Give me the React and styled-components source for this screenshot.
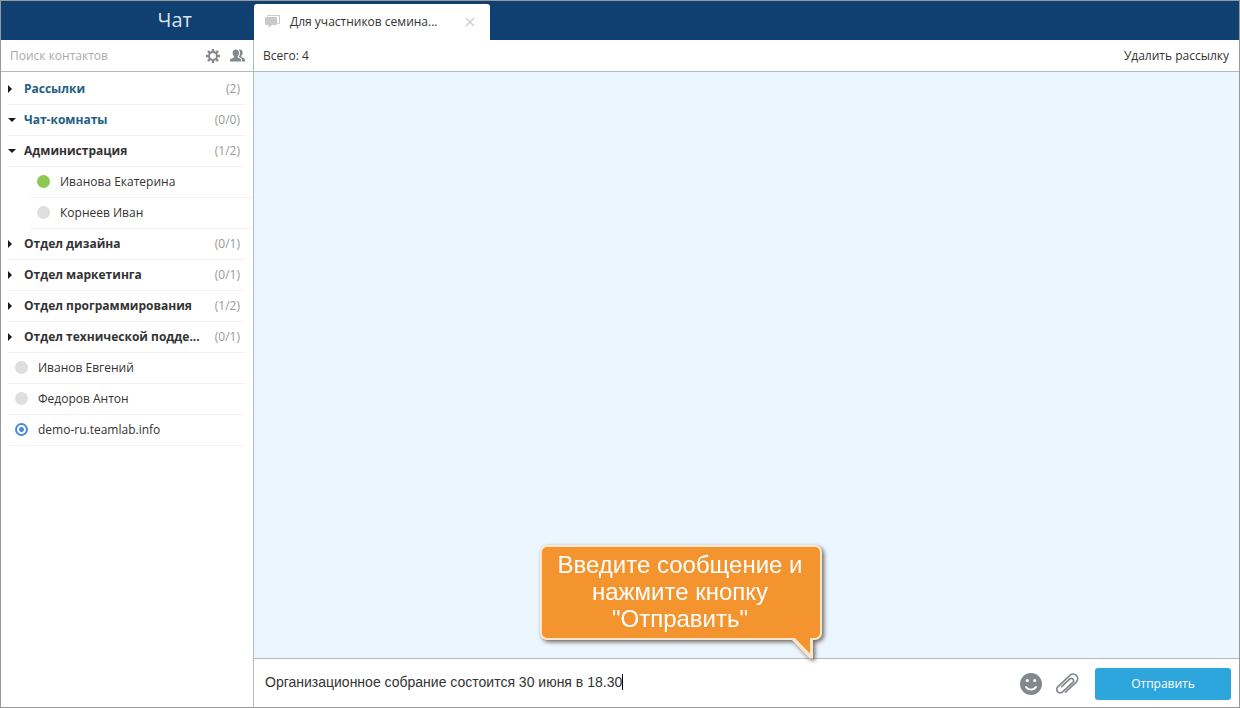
import React, { useState } from 'react';
import styled, { createGlobalStyle } from 'styled-components';

const groups = [
  { name: 'Рассылки', count: '(2)', system: true },
  { name: 'Чат-комнаты', count: '(0/0)', system: true, open: true },
  {
    name: 'Администрация',
    count: '(1/2)',
    open: true,
    people: [
      { name: 'Иванова Екатерина', status: 'online' },
      { name: 'Корнеев Иван', status: 'offline' }
    ]
  },
  { name: 'Отдел дизайна', count: '(0/1)' },
  { name: 'Отдел маркетинга', count: '(0/1)' },
  { name: 'Отдел программирования', count: '(1/2)' },
  { name: 'Отдел технической подде...', count: '(0/1)' }
];

const contacts = [
  { name: 'Иванов Евгений', status: 'offline' },
  { name: 'Федоров Антон', status: 'offline' },
  { name: 'demo-ru.teamlab.info', status: 'server' }
];

const GearIcon = () => (
  <svg width="14" height="14" viewBox="0 0 14 14" fill="none" stroke="#83888d">
    <circle cx="7" cy="7" r="4" strokeWidth="2" />
    <path
      strokeWidth="2.4"
      d="M7 0v2.6M7 11.4V14M0 7h2.6M11.4 7H14M2 2l1.9 1.900M10.100 10.100 12 12M2 12l1.900-1.900M10.100 3.900 12 2"
    />
  </svg>
);

const PeopleIcon = () => (
  <svg width="15" height="13" viewBox="0 0 15 13" fill="#83888d">
    <path d="M5.800 0.500c2 0 3.200 1.300 3.200 3.200 0 1.600-.6 2.900-1.400 3.600v1.200c1.500.7 3.400 1 3.600 2.400V12.500H0v-1.600c.2-1.400 2.600-1.700 4.100-2.400V7.300C3.300 6.600 2.600 5.300 2.600 3.700 2.600 1.800 3.800.5 5.800.5z" />
    <path d="M8.700.5c2.500-.3 3.900.9 3.900 2.900 0 1.500-.6 2.700-1.300 3.400v1.300c1.500.7 3.500 1.200 3.700 2.700v1.700h-3v-1.900c-.1-1.500-1.700-2-3.200-2.700.7-.8 1.100-2.200 1.100-4C9.900 2.400 9.600 1.300 8.700.5z" />
  </svg>
);

const BubblesIcon = () => (
  <svg width="15" height="14" viewBox="0 0 15 14">
    <path fill="none" stroke="#c9c9c9" d="M2.500 1.500v-1h12v8h-2" />
    <path
      fill="#c9c9c9"
      d="M1 2h10a1 1 0 0 1 1 1v6a1 1 0 0 1-1 1H7l-3.500 3v-3H1a1 1 0 0 1-1-1V3a1 1 0 0 1 1-1z"
    />
  </svg>
);

const CloseIcon = () => (
  <svg width="10" height="10" viewBox="0 0 10 10">
    <path stroke="#cfcfcf" strokeWidth="1.5" d="M1 1l8 8M9 1L1 9" />
  </svg>
);

const SmileIcon = () => (
  <svg width="22" height="22" viewBox="0 0 22 22">
    <circle cx="11" cy="11" r="11" fill="#83888d" />
    <circle cx="7.300" cy="7.500" r="1.600" fill="#fff" />
    <circle cx="14.700" cy="7.500" r="1.600" fill="#fff" />
    <path
      d="M6 14c2.200 3.400 7.800 3.400 10 0"
      fill="none"
      stroke="#fff"
      strokeWidth="1.800"
      strokeLinecap="round"
    />
  </svg>
);

const ClipIcon = () => (
  <svg width="25" height="22" viewBox="0 0 25 22">
    <path
      transform="translate(11.500 11) rotate(47)"
      d="M4.600 7V-7.600a4.600 4.600 0 0 0-9.200 0V9a3.500 3.500 0 0 0 7 0V-5.500a2.300 2.300 0 0 0-4.500 0V6"
      fill="none"
      stroke="#83888d"
      strokeWidth="1.700"
      strokeLinecap="round"
      strokeLinejoin="round"
    />
  </svg>
);

const Contact = ({ name, status, nested }) => (
  <ContactRow $nested={nested}>
    <Status $status={status} />
    <ContactName>{name}</ContactName>
  </ContactRow>
);

const App = () => {
  const [message, setMessage] = useState(
    'Организационное собрание состоится 30 июня в 18.30'
  );

  return (
    <Page>
      <GlobalStyle />
      <Header>
        <Title>Чат</Title>
        <Tab>
          <BubblesIcon />
          <TabName>Для участников семина...</TabName>
          <IconButton aria-label="Закрыть">
            <CloseIcon />
          </IconButton>
        </Tab>
      </Header>
      <Body>
        <Sidebar>
          <SearchBar>
            <Search placeholder="Поиск контактов" aria-label="Поиск контактов" />
            <IconButton aria-label="Настройки">
              <GearIcon />
            </IconButton>
            <IconButton aria-label="Контакты">
              <PeopleIcon />
            </IconButton>
          </SearchBar>
          <List>
            {groups.map(group => (
              <li key={group.name}>
                <GroupRow aria-expanded={!!group.open}>
                  <Arrow $open={group.open} />
                  <GroupName $system={group.system}>{group.name}</GroupName>
                  <Count>{group.count}</Count>
                </GroupRow>
                {group.people && (
                  <SubList>
                    {group.people.map(person => (
                      <Contact key={person.name} nested {...person} />
                    ))}
                  </SubList>
                )}
              </li>
            ))}
            {contacts.map(contact => (
              <Contact key={contact.name} {...contact} />
            ))}
          </List>
        </Sidebar>
        <Main>
          <InfoBar>
            <span>Всего: 4</span>
            <TextButton>Удалить рассылку</TextButton>
          </InfoBar>
          <Messages>
            <Callout>
              <CalloutBox>Введите сообщение и нажмите кнопку "Отправить"</CalloutBox>
              <CalloutTail width="24" height="21" viewBox="0 0 24 21">
                <path fill="#fde6cd" d="M0 1h24v19.500h-3.500L3 2H0z" />
                <path fill="#f4942e" d="M3 0h18v15.500L6 0z" />
              </CalloutTail>
            </Callout>
          </Messages>
          <Composer>
            <MessageBox>
              <MessageInput
                aria-label="Сообщение"
                value={message}
                onChange={e => setMessage(e.target.value)}
              />
              <Caret />
            </MessageBox>
            <IconButton aria-label="Смайлы">
              <SmileIcon />
            </IconButton>
            <IconButton aria-label="Прикрепить файл">
              <ClipIcon />
            </IconButton>
            <SendButton>Отправить</SendButton>
          </Composer>
        </Main>
      </Body>
    </Page>
  );
};

const GlobalStyle = createGlobalStyle`
  * {
    box-sizing: border-box;
  }

  body {
    margin: 0;
    color: #333;
    font-family: 'Open Sans', sans-serif;
    font-size: 12px;
    line-height: 16px;
  }

  button,
  input {
    margin: 0;
    padding: 0;
    border: 0;
    background: none;
    color: inherit;
    font: inherit;
  }

  svg {
    display: block;
    flex: none;
  }
`;

const Page = styled.div`
  display: flex;
  flex-direction: column;
  min-height: 100vh;
  border: 1px solid #999;
  background: #fff;
`;

const Header = styled.header`
  display: flex;
  align-items: flex-end;
  height: 39px;
  background: #0f4071;
`;

const Title = styled.h1`
  width: 253px;
  margin: 0;
  padding: 0 62px 7px 0;
  color: #dbe3ea;
  font-size: 20px;
  font-weight: 400;
  line-height: 26px;
  text-align: right;
`;

const Tab = styled.div`
  display: flex;
  align-items: center;
  width: 236px;
  height: 36px;
  padding: 0 15px 0 11px;
  border-radius: 3px 3px 0 0;
  background: #fff;
`;

const TabName = styled.span`
  margin: 0 auto 0 10px;
  white-space: nowrap;
`;

const IconButton = styled.button`
  display: flex;
  flex: none;
  cursor: pointer;
`;

const Body = styled.div`
  display: flex;
  flex: 1;
`;

const Sidebar = styled.aside`
  flex: none;
  width: 253px;
  border-right: 1px solid #b7babc;
`;

const SearchBar = styled.div`
  display: flex;
  align-items: center;
  gap: 10px;
  height: 32px;
  padding: 0 8px 0 9px;
  border-bottom: 1px solid #b7babc;
`;

const Search = styled.input`
  flex: 1;
  min-width: 0;

  &::placeholder {
    color: #aaa;
    opacity: 1;
  }
`;

const List = styled.ul`
  margin: 0;
  padding: 2px 0 0 7px;
  list-style: none;
`;

const SubList = styled.ul`
  margin: 0;
  padding: 0 0 0 22px;
  list-style: none;
`;

const GroupRow = styled.button`
  display: flex;
  align-items: center;
  width: 237px;
  height: 31px;
  padding-right: 5px;
  border-bottom: 1px solid #f2f2f2;
  text-align: left;
  cursor: pointer;
`;

const Arrow = styled.span`
  width: ${p => (p.$open ? 8 : 4)}px;
  margin-right: ${p => (p.$open ? 8 : 12)}px;
  border: 4px solid transparent;
  ${p =>
    p.$open
      ? 'border-top-color: #1a1a1a; border-bottom: 0;'
      : 'border-left-color: #1a1a1a; border-right: 0;'}
`;

const GroupName = styled.span`
  margin-right: auto;
  color: ${p => (p.$system ? '#225e82' : '#333')};
  font-weight: 700;
  white-space: nowrap;
`;

const Count = styled.span`
  color: #999;
`;

const ContactRow = styled.li`
  display: flex;
  align-items: center;
  gap: 10px;
  width: ${p => (p.$nested ? 'auto' : '237px')};
  height: 31px;
  padding-left: 7px;
  border-bottom: 1px solid #f2f2f2;
`;

const Status = styled.span`
  width: 13px;
  height: 13px;
  margin-bottom: 1px;
  border-radius: 50%;
  background: ${p => (p.$status === 'online' ? '#8dc951' : '#dedede')};
  ${p =>
    p.$status === 'server' &&
    `
    border: 2px solid #4a8bd9;
    background: radial-gradient(circle, #4a8bd9 2px, #fff 3px);
  `}
`;

const ContactName = styled.span`
  white-space: nowrap;
`;

const Main = styled.main`
  display: flex;
  flex: 1;
  flex-direction: column;
  min-width: 0;
`;

const InfoBar = styled.div`
  display: flex;
  align-items: center;
  justify-content: space-between;
  height: 32px;
  padding: 0 10px 0 9px;
  border-bottom: 1px solid #b7babc;
`;

const TextButton = styled.button`
  cursor: pointer;
`;

const Messages = styled.section`
  position: relative;
  flex: 1;
  background: #ebf6ff;
`;

const Callout = styled.div`
  position: absolute;
  bottom: 18px;
  left: 286px;
  width: 282px;
  filter: drop-shadow(2px 2px 2px rgba(60, 40, 20, 0.7));
`;

const CalloutBox = styled.div`
  padding: 4px 11px 6px 9px;
  border: 2px solid #fde6cd;
  border-radius: 7px;
  background: #f4942e;
  color: #fff;
  font-family: 'Liberation Sans', Arial, sans-serif;
  font-size: 24px;
  line-height: 27px;
  text-align: center;
`;

const CalloutTail = styled.svg`
  position: absolute;
  top: calc(100% - 2px);
  right: 9px;
`;

const Composer = styled.footer`
  display: flex;
  align-items: center;
  height: 49px;
  padding: 2px 8px 0 11px;
  gap: 14px;
  border-top: 1px solid #b7babc;
`;

const MessageBox = styled.div`
  display: flex;
  flex: 1;
  align-items: center;
  min-width: 0;
  padding-bottom: 4px;
`;

const MessageInput = styled.input`
  field-sizing: content;
  max-width: 100%;
  outline: 0;
  font-family: 'Liberation Sans', Arial, sans-serif;
  font-size: 14px;
`;

const Caret = styled.span`
  width: 1px;
  height: 16px;
  background: #000;
`;

const SendButton = styled.button`
  width: 136px;
  height: 32px;
  border-radius: 3px;
  background: #2da6de;
  color: #fff;
  cursor: pointer;
`;

export default App;
